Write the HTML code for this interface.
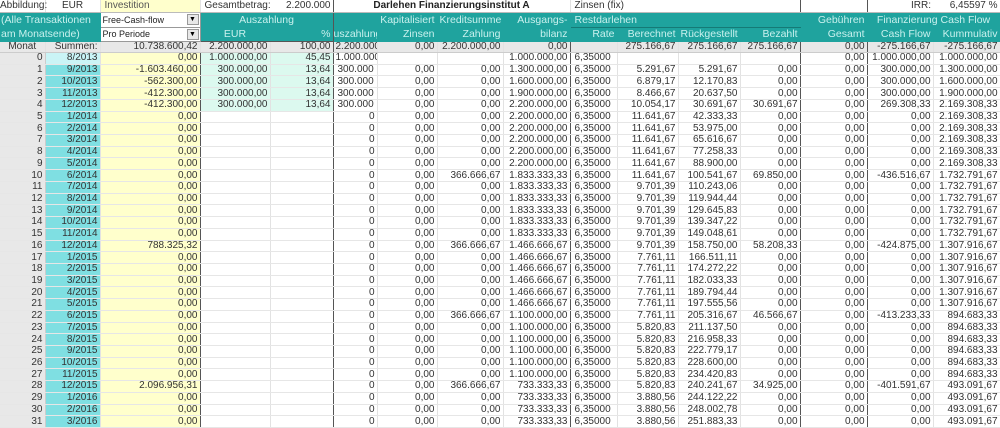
<!DOCTYPE html>
<html><head><meta charset="utf-8"><style>
*{margin:0;padding:0;box-sizing:border-box}
body{width:1000px;height:428px;overflow:hidden;background:#fff;font-family:"Liberation Sans",Arial,sans-serif;font-size:10px;color:#333}
table{border-collapse:collapse;table-layout:fixed;width:1000px}
td{padding:0 2px;white-space:nowrap;overflow:hidden;text-align:right;border-right:1px solid #e2e2e2;border-bottom:1px solid #e6e6e6;height:11.72px;line-height:10px}
tr.h1 td{height:12px;border-bottom:1px solid #bbb}
tr.h2 td{height:15px;background:#1fa39e;color:#c9f1ee;border-color:#1fa39e;font-size:10.5px}
tr.h3 td{height:14px;background:#1fa39e;color:#c9f1ee;border-color:#1fa39e;font-size:10.5px}
tr.s td{height:11.5px;background:#e8e8e8;border-bottom:1px solid #ccc}
td.a{background:#e8e8e8;border-right:1px solid #ccc}
td.b{background:#7fdfe2}
td.c{background:#ffffcc;border-right:1px solid #555}
td.m{background:#dcf9ef}
.L{text-align:left;padding-left:4px}.C{text-align:center}
.ov{overflow:visible;padding:0}
.bl{border-left:1px solid #555!important}
.br{border-right:1px solid #555!important}
.dd{background:#fff!important;color:#222!important;text-align:left;font-size:9px!important;position:relative;border:1px solid #999!important;padding-left:2px}
.dd span{position:absolute;right:1px;top:1px;width:12px;height:11px;background:#e8e8e8;border:1px solid #999;font-size:7px;text-align:center;line-height:9px;color:#000}
</style></head><body>
<table>
<colgroup><col style="width:45px"><col style="width:55px"><col style="width:100px"><col style="width:70px"><col style="width:63px"><col style="width:44px"><col style="width:60px"><col style="width:66px"><col style="width:67px"><col style="width:47px"><col style="width:61px"><col style="width:62px"><col style="width:60px"><col style="width:67px"><col style="width:66px"><col style="width:67px"></colgroup>
<tr class="h1"><td class="ov" style="text-align:left">Abbildung:</td><td class="C">EUR</td><td class="L" style="background:#ffffcc;color:#555">Investition</td><td class="L bl" style="border-right:0">Gesamtbetrag:</td><td class="br">2.200.000</td><td colspan="4" class="C" style="font-weight:bold;color:#222">Darlehen Finanzierungsinstitut A</td><td colspan="4" class="L bl br">Zinsen (fix)</td><td class="br"></td><td class="L" style="text-align:right;border-right:0">IRR:</td><td>6,45597 %</td></tr>
<tr class="h2"><td colspan="2" class="L" style="padding-left:1px">(Alle Transaktionen</td><td class="dd">Free-Cash-flow<span>▼</span></td><td colspan="2" class="C" style="border:1px solid #555;border-bottom:0">Auszahlung</td><td></td><td>Kapitalisiert</td><td>Kreditsumme</td><td>Ausgangs-</td><td colspan="4" class="L" style="border-bottom:1px solid #157a76">Restdarlehen</td><td>Gebühren</td><td colspan="2" class="C">Finanzierung Cash Flow</td></tr>
<tr class="h3"><td colspan="2" class="L" style="padding-left:1px">am Monatsende)</td><td class="dd">Pro Periode<span>▼</span></td><td class="C bl" style="border-bottom:1px solid #555">EUR</td><td class="br" style="border-bottom:1px solid #555">%</td><td class="L" style="padding:0">uszahlung</td><td>Zinsen</td><td>Zahlung</td><td>bilanz</td><td>Rate</td><td>Berechnet</td><td>Rückgestellt</td><td>Bezahlt</td><td>Gesamt</td><td>Cash Flow</td><td>Kummulativ</td></tr>
<tr class="s"><td class="C ov">Monat</td><td>Summen:</td><td>10.738.600,42</td><td class="bl">2.200.000,00</td><td class="br">100,00</td><td class="L" style="padding-left:2px">2.200.000</td><td>0,00</td><td>2.200.000,00</td><td class="br">0,00</td><td></td><td>275.166,67</td><td>275.166,67</td><td class="br">275.166,67</td><td class="br">0,00</td><td>-275.166,67</td><td>-275.166,67</td></tr>
<tr><td class="a">0</td><td class="b" style="background:#caf4f6">8/2013</td><td class="c">0,00</td><td class="m">1.000.000,00</td><td class="m br">45,45</td><td class="L" style="padding-left:2px">1.000.000</td><td></td><td></td><td class="br">1.000.000,00</td><td class="L">6,35000</td><td></td><td></td><td class="br"></td><td class="br">0,00</td><td>1.000.000,00</td><td>1.000.000,00</td></tr>
<tr><td class="a">1</td><td class="b">9/2013</td><td class="c">-1.603.460,00</td><td class="m">300.000,00</td><td class="m br">13,64</td><td class="L">300.000</td><td>0,00</td><td>0,00</td><td class="br">1.300.000,00</td><td class="L">6,35000</td><td>5.291,67</td><td>5.291,67</td><td class="br">0,00</td><td class="br">0,00</td><td>300.000,00</td><td>1.300.000,00</td></tr>
<tr><td class="a">2</td><td class="b">10/2013</td><td class="c">-562.300,00</td><td class="m">300.000,00</td><td class="m br">13,64</td><td class="L">300.000</td><td>0,00</td><td>0,00</td><td class="br">1.600.000,00</td><td class="L">6,35000</td><td>6.879,17</td><td>12.170,83</td><td class="br">0,00</td><td class="br">0,00</td><td>300.000,00</td><td>1.600.000,00</td></tr>
<tr><td class="a">3</td><td class="b">11/2013</td><td class="c">-412.300,00</td><td class="m">300.000,00</td><td class="m br">13,64</td><td class="L">300.000</td><td>0,00</td><td>0,00</td><td class="br">1.900.000,00</td><td class="L">6,35000</td><td>8.466,67</td><td>20.637,50</td><td class="br">0,00</td><td class="br">0,00</td><td>300.000,00</td><td>1.900.000,00</td></tr>
<tr><td class="a">4</td><td class="b">12/2013</td><td class="c">-412.300,00</td><td class="m">300.000,00</td><td class="m br">13,64</td><td class="L">300.000</td><td>0,00</td><td>0,00</td><td class="br">2.200.000,00</td><td class="L">6,35000</td><td>10.054,17</td><td>30.691,67</td><td class="br">30.691,67</td><td class="br">0,00</td><td>269.308,33</td><td>2.169.308,33</td></tr>
<tr><td class="a">5</td><td class="b">1/2014</td><td class="c">0,00</td><td></td><td class="br"></td><td>0</td><td>0,00</td><td>0,00</td><td class="br">2.200.000,00</td><td class="L">6,35000</td><td>11.641,67</td><td>42.333,33</td><td class="br">0,00</td><td class="br">0,00</td><td>0,00</td><td>2.169.308,33</td></tr>
<tr><td class="a">6</td><td class="b">2/2014</td><td class="c">0,00</td><td></td><td class="br"></td><td>0</td><td>0,00</td><td>0,00</td><td class="br">2.200.000,00</td><td class="L">6,35000</td><td>11.641,67</td><td>53.975,00</td><td class="br">0,00</td><td class="br">0,00</td><td>0,00</td><td>2.169.308,33</td></tr>
<tr><td class="a">7</td><td class="b">3/2014</td><td class="c">0,00</td><td></td><td class="br"></td><td>0</td><td>0,00</td><td>0,00</td><td class="br">2.200.000,00</td><td class="L">6,35000</td><td>11.641,67</td><td>65.616,67</td><td class="br">0,00</td><td class="br">0,00</td><td>0,00</td><td>2.169.308,33</td></tr>
<tr><td class="a">8</td><td class="b">4/2014</td><td class="c">0,00</td><td></td><td class="br"></td><td>0</td><td>0,00</td><td>0,00</td><td class="br">2.200.000,00</td><td class="L">6,35000</td><td>11.641,67</td><td>77.258,33</td><td class="br">0,00</td><td class="br">0,00</td><td>0,00</td><td>2.169.308,33</td></tr>
<tr><td class="a">9</td><td class="b">5/2014</td><td class="c">0,00</td><td></td><td class="br"></td><td>0</td><td>0,00</td><td>0,00</td><td class="br">2.200.000,00</td><td class="L">6,35000</td><td>11.641,67</td><td>88.900,00</td><td class="br">0,00</td><td class="br">0,00</td><td>0,00</td><td>2.169.308,33</td></tr>
<tr><td class="a">10</td><td class="b">6/2014</td><td class="c">0,00</td><td></td><td class="br"></td><td>0</td><td>0,00</td><td>366.666,67</td><td class="br">1.833.333,33</td><td class="L">6,35000</td><td>11.641,67</td><td>100.541,67</td><td class="br">69.850,00</td><td class="br">0,00</td><td>-436.516,67</td><td>1.732.791,67</td></tr>
<tr><td class="a">11</td><td class="b">7/2014</td><td class="c">0,00</td><td></td><td class="br"></td><td>0</td><td>0,00</td><td>0,00</td><td class="br">1.833.333,33</td><td class="L">6,35000</td><td>9.701,39</td><td>110.243,06</td><td class="br">0,00</td><td class="br">0,00</td><td>0,00</td><td>1.732.791,67</td></tr>
<tr><td class="a">12</td><td class="b">8/2014</td><td class="c">0,00</td><td></td><td class="br"></td><td>0</td><td>0,00</td><td>0,00</td><td class="br">1.833.333,33</td><td class="L">6,35000</td><td>9.701,39</td><td>119.944,44</td><td class="br">0,00</td><td class="br">0,00</td><td>0,00</td><td>1.732.791,67</td></tr>
<tr><td class="a">13</td><td class="b">9/2014</td><td class="c">0,00</td><td></td><td class="br"></td><td>0</td><td>0,00</td><td>0,00</td><td class="br">1.833.333,33</td><td class="L">6,35000</td><td>9.701,39</td><td>129.645,83</td><td class="br">0,00</td><td class="br">0,00</td><td>0,00</td><td>1.732.791,67</td></tr>
<tr><td class="a">14</td><td class="b">10/2014</td><td class="c">0,00</td><td></td><td class="br"></td><td>0</td><td>0,00</td><td>0,00</td><td class="br">1.833.333,33</td><td class="L">6,35000</td><td>9.701,39</td><td>139.347,22</td><td class="br">0,00</td><td class="br">0,00</td><td>0,00</td><td>1.732.791,67</td></tr>
<tr><td class="a">15</td><td class="b">11/2014</td><td class="c">0,00</td><td></td><td class="br"></td><td>0</td><td>0,00</td><td>0,00</td><td class="br">1.833.333,33</td><td class="L">6,35000</td><td>9.701,39</td><td>149.048,61</td><td class="br">0,00</td><td class="br">0,00</td><td>0,00</td><td>1.732.791,67</td></tr>
<tr><td class="a">16</td><td class="b">12/2014</td><td class="c">788.325,32</td><td></td><td class="br"></td><td>0</td><td>0,00</td><td>366.666,67</td><td class="br">1.466.666,67</td><td class="L">6,35000</td><td>9.701,39</td><td>158.750,00</td><td class="br">58.208,33</td><td class="br">0,00</td><td>-424.875,00</td><td>1.307.916,67</td></tr>
<tr><td class="a">17</td><td class="b">1/2015</td><td class="c">0,00</td><td></td><td class="br"></td><td>0</td><td>0,00</td><td>0,00</td><td class="br">1.466.666,67</td><td class="L">6,35000</td><td>7.761,11</td><td>166.511,11</td><td class="br">0,00</td><td class="br">0,00</td><td>0,00</td><td>1.307.916,67</td></tr>
<tr><td class="a">18</td><td class="b">2/2015</td><td class="c">0,00</td><td></td><td class="br"></td><td>0</td><td>0,00</td><td>0,00</td><td class="br">1.466.666,67</td><td class="L">6,35000</td><td>7.761,11</td><td>174.272,22</td><td class="br">0,00</td><td class="br">0,00</td><td>0,00</td><td>1.307.916,67</td></tr>
<tr><td class="a">19</td><td class="b">3/2015</td><td class="c">0,00</td><td></td><td class="br"></td><td>0</td><td>0,00</td><td>0,00</td><td class="br">1.466.666,67</td><td class="L">6,35000</td><td>7.761,11</td><td>182.033,33</td><td class="br">0,00</td><td class="br">0,00</td><td>0,00</td><td>1.307.916,67</td></tr>
<tr><td class="a">20</td><td class="b">4/2015</td><td class="c">0,00</td><td></td><td class="br"></td><td>0</td><td>0,00</td><td>0,00</td><td class="br">1.466.666,67</td><td class="L">6,35000</td><td>7.761,11</td><td>189.794,44</td><td class="br">0,00</td><td class="br">0,00</td><td>0,00</td><td>1.307.916,67</td></tr>
<tr><td class="a">21</td><td class="b">5/2015</td><td class="c">0,00</td><td></td><td class="br"></td><td>0</td><td>0,00</td><td>0,00</td><td class="br">1.466.666,67</td><td class="L">6,35000</td><td>7.761,11</td><td>197.555,56</td><td class="br">0,00</td><td class="br">0,00</td><td>0,00</td><td>1.307.916,67</td></tr>
<tr><td class="a">22</td><td class="b">6/2015</td><td class="c">0,00</td><td></td><td class="br"></td><td>0</td><td>0,00</td><td>366.666,67</td><td class="br">1.100.000,00</td><td class="L">6,35000</td><td>7.761,11</td><td>205.316,67</td><td class="br">46.566,67</td><td class="br">0,00</td><td>-413.233,33</td><td>894.683,33</td></tr>
<tr><td class="a">23</td><td class="b">7/2015</td><td class="c">0,00</td><td></td><td class="br"></td><td>0</td><td>0,00</td><td>0,00</td><td class="br">1.100.000,00</td><td class="L">6,35000</td><td>5.820,83</td><td>211.137,50</td><td class="br">0,00</td><td class="br">0,00</td><td>0,00</td><td>894.683,33</td></tr>
<tr><td class="a">24</td><td class="b">8/2015</td><td class="c">0,00</td><td></td><td class="br"></td><td>0</td><td>0,00</td><td>0,00</td><td class="br">1.100.000,00</td><td class="L">6,35000</td><td>5.820,83</td><td>216.958,33</td><td class="br">0,00</td><td class="br">0,00</td><td>0,00</td><td>894.683,33</td></tr>
<tr><td class="a">25</td><td class="b">9/2015</td><td class="c">0,00</td><td></td><td class="br"></td><td>0</td><td>0,00</td><td>0,00</td><td class="br">1.100.000,00</td><td class="L">6,35000</td><td>5.820,83</td><td>222.779,17</td><td class="br">0,00</td><td class="br">0,00</td><td>0,00</td><td>894.683,33</td></tr>
<tr><td class="a">26</td><td class="b">10/2015</td><td class="c">0,00</td><td></td><td class="br"></td><td>0</td><td>0,00</td><td>0,00</td><td class="br">1.100.000,00</td><td class="L">6,35000</td><td>5.820,83</td><td>228.600,00</td><td class="br">0,00</td><td class="br">0,00</td><td>0,00</td><td>894.683,33</td></tr>
<tr><td class="a">27</td><td class="b">11/2015</td><td class="c">0,00</td><td></td><td class="br"></td><td>0</td><td>0,00</td><td>0,00</td><td class="br">1.100.000,00</td><td class="L">6,35000</td><td>5.820,83</td><td>234.420,83</td><td class="br">0,00</td><td class="br">0,00</td><td>0,00</td><td>894.683,33</td></tr>
<tr><td class="a">28</td><td class="b">12/2015</td><td class="c">2.096.956,31</td><td></td><td class="br"></td><td>0</td><td>0,00</td><td>366.666,67</td><td class="br">733.333,33</td><td class="L">6,35000</td><td>5.820,83</td><td>240.241,67</td><td class="br">34.925,00</td><td class="br">0,00</td><td>-401.591,67</td><td>493.091,67</td></tr>
<tr><td class="a">29</td><td class="b">1/2016</td><td class="c">0,00</td><td></td><td class="br"></td><td>0</td><td>0,00</td><td>0,00</td><td class="br">733.333,33</td><td class="L">6,35000</td><td>3.880,56</td><td>244.122,22</td><td class="br">0,00</td><td class="br">0,00</td><td>0,00</td><td>493.091,67</td></tr>
<tr><td class="a">30</td><td class="b">2/2016</td><td class="c">0,00</td><td></td><td class="br"></td><td>0</td><td>0,00</td><td>0,00</td><td class="br">733.333,33</td><td class="L">6,35000</td><td>3.880,56</td><td>248.002,78</td><td class="br">0,00</td><td class="br">0,00</td><td>0,00</td><td>493.091,67</td></tr>
<tr><td class="a">31</td><td class="b">3/2016</td><td class="c">0,00</td><td></td><td class="br"></td><td>0</td><td>0,00</td><td>0,00</td><td class="br">733.333,33</td><td class="L">6,35000</td><td>3.880,56</td><td>251.883,33</td><td class="br">0,00</td><td class="br">0,00</td><td>0,00</td><td>493.091,67</td></tr>
</table>
</body></html>
